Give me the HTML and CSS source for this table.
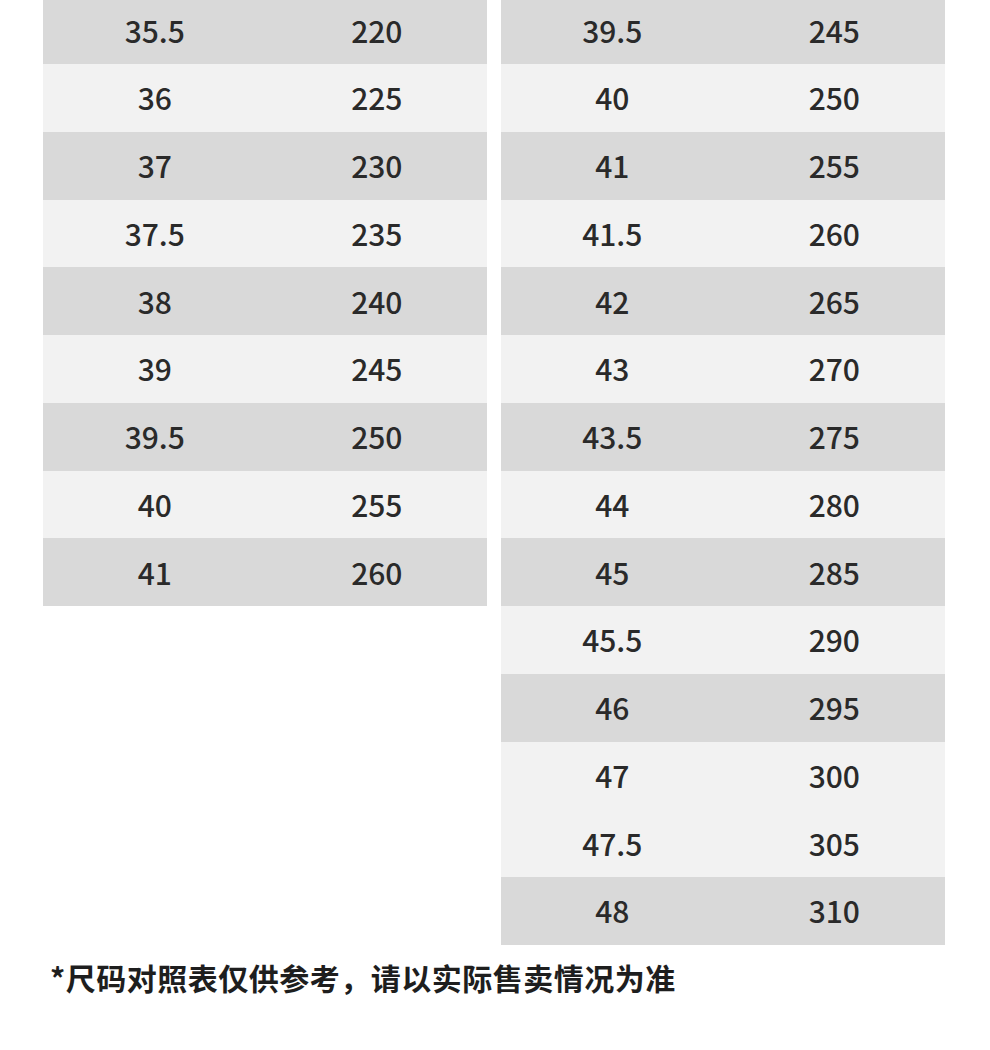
FILE: index.html
```html
<!DOCTYPE html>
<html lang="zh-CN">
<head>
<meta charset="utf-8">
<title>尺码对照表</title>
<link rel="stylesheet" href="styles.css">
</head>
<body>
<div class="tables">
  <div class="table">
    <div class="row dark"><span>35.5</span><span>220</span></div>
    <div class="row light"><span>36</span><span>225</span></div>
    <div class="row dark"><span>37</span><span>230</span></div>
    <div class="row light"><span>37.5</span><span>235</span></div>
    <div class="row dark"><span>38</span><span>240</span></div>
    <div class="row light"><span>39</span><span>245</span></div>
    <div class="row dark"><span>39.5</span><span>250</span></div>
    <div class="row light"><span>40</span><span>255</span></div>
    <div class="row dark"><span>41</span><span>260</span></div>
  </div>
  <div class="table">
    <div class="row dark"><span>39.5</span><span>245</span></div>
    <div class="row light"><span>40</span><span>250</span></div>
    <div class="row dark"><span>41</span><span>255</span></div>
    <div class="row light"><span>41.5</span><span>260</span></div>
    <div class="row dark"><span>42</span><span>265</span></div>
    <div class="row light"><span>43</span><span>270</span></div>
    <div class="row dark"><span>43.5</span><span>275</span></div>
    <div class="row light"><span>44</span><span>280</span></div>
    <div class="row dark"><span>45</span><span>285</span></div>
    <div class="row light"><span>45.5</span><span>290</span></div>
    <div class="row dark"><span>46</span><span>295</span></div>
    <div class="row light"><span>47</span><span>300</span></div>
    <div class="row light"><span>47.5</span><span>305</span></div>
    <div class="row dark"><span>48</span><span>310</span></div>
  </div>
</div>
<p class="note">*尺码对照表仅供参考，请以实际售卖情况为准</p>
</body>
</html>
```
FILE: styles.css
```css
html, body {
  margin: 0;
  padding: 0;
  background: #ffffff;
}
body {
  font-family: "Noto Sans CJK SC", "Noto Sans", sans-serif;
  color: #2a2a2a;
  width: 990px;
  height: 1050px;
  overflow: hidden;
}
.tables {
  display: flex;
  align-items: flex-start;
  gap: 13.5px;
  padding-left: 43.3px;
  margin-top: -3.75px;
}
.table {
  width: 444px;
  display: flex;
  flex-direction: column;
}
.row {
  display: grid;
  grid-template-columns: 223px 1fr;
  height: 67.75px;
  align-items: center;
  font-size: 30px;
  font-weight: 500;
  line-height: 1;
}
.row span {
  text-align: center;
  padding-bottom: 1px;
}
.dark {
  background: #d9d9d9;
}
.light {
  background: #f2f2f2;
}
.note {
  margin: 17px 0 0 0;
  padding-left: 50px;
  font-size: 30px;
  font-weight: 700;
  line-height: 30px;
  letter-spacing: 0.5px;
  color: #1e1e1e;
}
```
